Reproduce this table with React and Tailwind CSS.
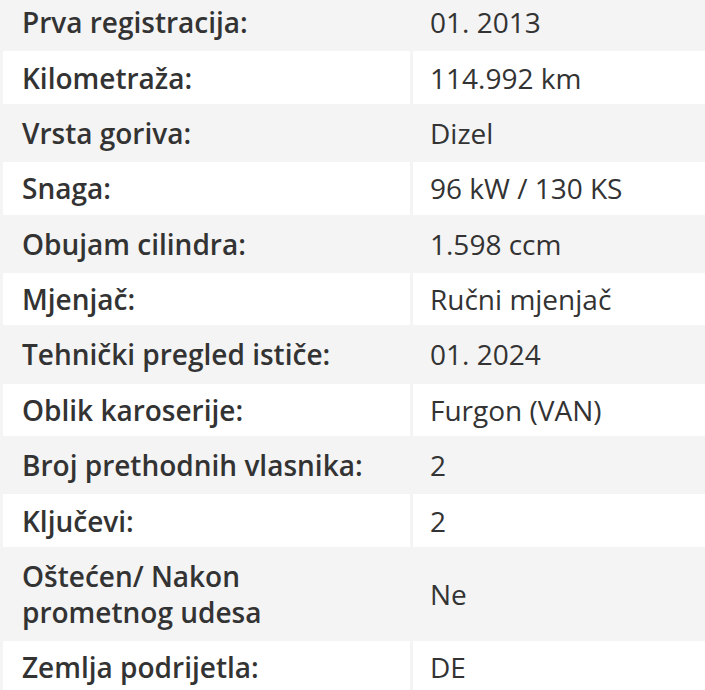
import React from "react";

const rows = [
  ["Prva registracija:", "01. 2013"],
  ["Kilometraža:", "114.992 km"],
  ["Vrsta goriva:", "Dizel"],
  ["Snaga:", "96 kW / 130 KS"],
  ["Obujam cilindra:", "1.598 ccm"],
  ["Mjenjač:", "Ručni mjenjač"],
  ["Tehnički pregled ističe:", "01. 2024"],
  ["Oblik karoserije:", "Furgon (VAN)"],
  ["Broj prethodnih vlasnika:", "2"],
  ["Ključevi:", "2"],
  ["Oštećen/ Nakon\nprometnog udesa", "Ne"],
  ["Zemlja podrijetla:", "DE"],
];

export default function App() {
  return (
    <div className="w-[705px] h-[690px] overflow-hidden bg-[#f4f4f4]">
      <div
        className="mt-[-4px] pl-[3px] flex flex-col gap-[3px] text-[28px] leading-[36px] text-[#333333]"
        style={{ fontFamily: '"Open Sans", "Noto Sans", sans-serif' }}
      >
        {rows.map(([label, value], i) => {
          const bg = i % 2 === 0 ? "bg-[#f4f4f4]" : "bg-white";
          return (
            <div key={i} className="grid grid-cols-[407px_1fr] gap-[3px]">
              <div className={`${bg} pl-[19px] pr-2 py-[8.2px] font-semibold whitespace-pre-line flex items-center`}>
                {label}
              </div>
              <div className={`${bg} pl-[17px] pr-2 py-[8.2px] flex items-center`}>
                {value}
              </div>
            </div>
          );
        })}
      </div>
    </div>
  );
}
